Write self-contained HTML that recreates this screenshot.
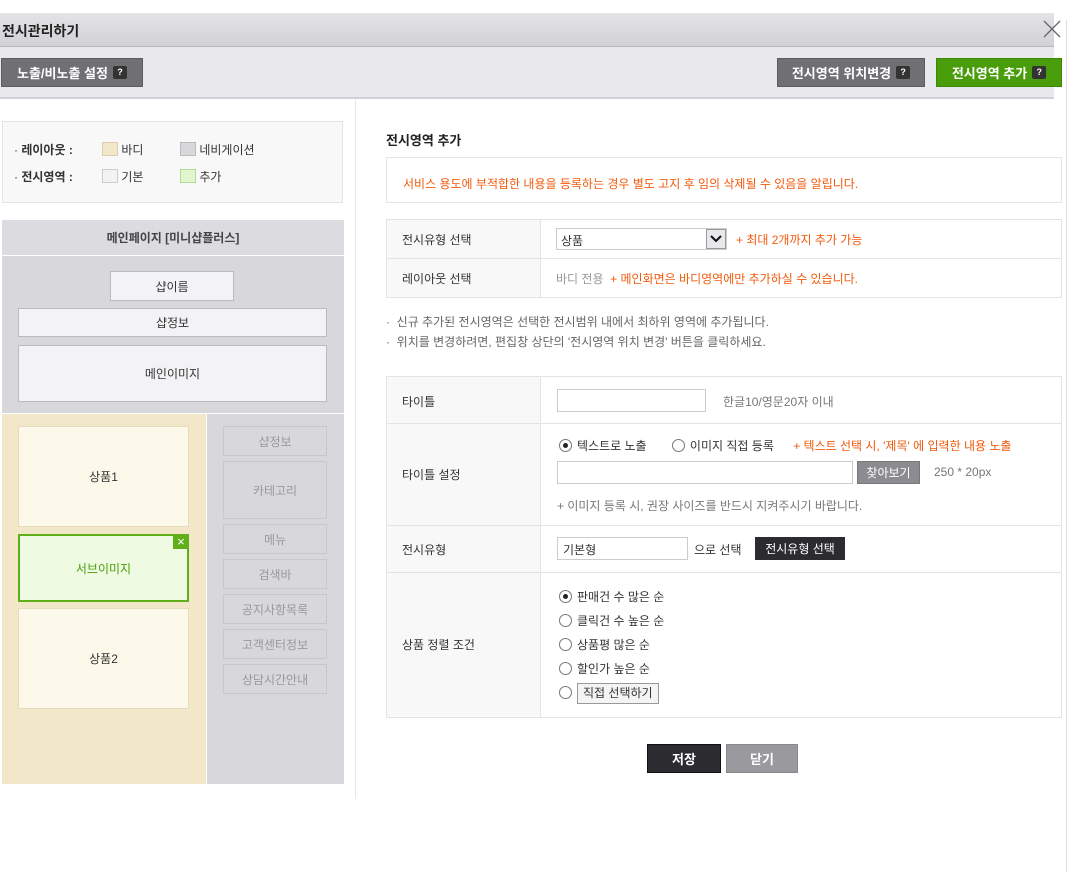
<!DOCTYPE html>
<html><head><meta charset="utf-8"><style>
*{box-sizing:border-box;margin:0;padding:0}
body{width:1080px;height:872px;background:#fff;font-family:"Liberation Sans","Noto Sans CJK KR",sans-serif;font-size:12px;color:#333;position:relative;overflow:hidden}
.a{position:absolute}
.bx{position:absolute;display:flex;align-items:center;justify-content:center}
.q{display:inline-block;width:14px;height:13px;background:#333;color:#fff;font-size:9px;line-height:13px;text-align:center;border-radius:2px;margin-left:5px;font-weight:bold}
.btn{position:absolute;display:flex;align-items:center;justify-content:center;color:#fff;font-size:13px;font-weight:bold}
.or{color:#f25a0c}
.rad{display:inline-block;width:13px;height:13px;border:1px solid #777;border-radius:50%;vertical-align:-2px;margin-right:5px;position:relative;background:#fff}
.rad.on:after{content:"";position:absolute;left:3px;top:3px;width:5px;height:5px;border-radius:50%;background:#222}
.nav{position:absolute;left:223px;width:104px;border:1px solid #c8c8cc;background:#d8d8dc;color:#999;display:flex;align-items:center;justify-content:center}
.inp{position:absolute;border:1px solid #ccc;background:#fff}
.sw{display:inline-block;width:16px;height:14px;vertical-align:-2px}
</style></head><body>
<div class="a" style="left:0;top:13px;width:1054px;height:34px;background:linear-gradient(#e4e4e7,#d2d2d6);border-bottom:1px solid #b8b8bc"></div>
<div class="a" style="left:2px;top:21px;font-size:14px;font-weight:bold;color:#222">전시관리하기</div>
<svg class="a" style="left:1042px;top:19px" width="20" height="20"><path d="M2 2L18 18M18 2L2 18" stroke="#666" stroke-width="1.3"/></svg>
<div class="a" style="left:0;top:47px;width:1054px;height:52px;background:#e9e9ed;border-bottom:2px solid #d0d0d6"></div>
<div class="a" style="left:1066px;top:20px;width:1px;height:852px;background:#ddd"></div>
<div class="btn" style="left:1px;top:58px;width:142px;height:29px;background:#707074;border:1px solid #5c5c60">노출/비노출 설정<span class="q">?</span></div>
<div class="btn" style="left:777px;top:58px;width:148px;height:29px;background:#707074;border:1px solid #5c5c60">전시영역 위치변경<span class="q">?</span></div>
<div class="btn" style="left:936px;top:58px;width:126px;height:29px;background:#4a9d0a;border:1px solid #3e8808">전시영역 추가<span class="q">?</span></div>
<div class="a" style="left:355px;top:99px;width:1px;height:700px;background:#e8e8e8"></div>
<!-- legend -->
<div class="a" style="left:2px;top:121px;width:341px;height:82px;background:#f8f8f8;border:1px solid #e4e4e4"></div>
<div class="a" style="left:14px;top:137px;line-height:27px;font-size:12px;width:320px">
<div style="position:relative">· <b>레이아웃 :</b><span class="a" style="left:88px;top:0"><span class="sw" style="background:#f2e8c9;border:1px solid #d9cfa9"></span> 바디</span><span class="a" style="left:166px;top:0"><span class="sw" style="background:#d8d8dc;border:1px solid #bbb"></span> 네비게이션</span></div>
<div style="position:relative">· <b>전시영역 :</b><span class="a" style="left:88px;top:0"><span class="sw" style="background:#f3f3f6;border:1px solid #ccc"></span> 기본</span><span class="a" style="left:166px;top:0"><span class="sw" style="background:#e2f6d0;border:1px solid #b6dc96"></span> 추가</span></div></div>
<!-- left map -->
<div class="bx" style="left:2px;top:220px;width:342px;height:35px;background:#dcdce0;font-weight:bold;color:#444">메인페이지 [미니샵플러스]</div>
<div class="a" style="left:2px;top:256px;width:342px;height:157px;background:#d8d8dc"></div>
<div class="bx" style="left:110px;top:271px;width:124px;height:30px;background:#f3f3f6;border:1px solid #bbb">샵이름</div>
<div class="bx" style="left:18px;top:308px;width:309px;height:29px;background:#f3f3f6;border:1px solid #bbb">샵정보</div>
<div class="bx" style="left:18px;top:345px;width:309px;height:57px;background:#f3f3f6;border:1px solid #bbb">메인이미지</div>
<div class="a" style="left:2px;top:414px;width:204px;height:370px;background:#f2e8c9"></div>
<div class="a" style="left:207px;top:414px;width:137px;height:370px;background:#d8d8dc"></div>
<div class="bx" style="left:18px;top:426px;width:171px;height:101px;background:#fcf8ea;border:1px solid #e6dcbb">상품1</div>
<div class="bx" style="left:18px;top:534px;width:171px;height:68px;background:#eefae2;border:2px solid #5fae1a;color:#4a9d0a">서브이미지</div>
<div class="bx" style="left:173px;top:534px;width:16px;height:15px;background:#5fae1a;color:#fff;font-size:13px">×</div>
<div class="bx" style="left:18px;top:608px;width:171px;height:101px;background:#fcf8ea;border:1px solid #e6dcbb">상품2</div>
<div class="nav" style="top:426px;height:30px">샵정보</div>
<div class="nav" style="top:461px;height:58px">카테고리</div>
<div class="nav" style="top:524px;height:30px">메뉴</div>
<div class="nav" style="top:559px;height:30px">검색바</div>
<div class="nav" style="top:594px;height:30px">공지사항목록</div>
<div class="nav" style="top:629px;height:30px">고객센터정보</div>
<div class="nav" style="top:664px;height:30px">상담시간안내</div>
<!-- right -->
<div class="a" style="left:386px;top:130px;font-size:13px;font-weight:bold;color:#222">전시영역 추가</div>
<div class="a" style="left:386px;top:157px;width:676px;height:46px;border:1px solid #e4e4e4;padding:17px 0 0 16px" ><span class="or">서비스 용도에 부적합한 내용을 등록하는 경우 별도 고지 후 임의 삭제될 수 있음을 알립니다.</span></div>
<div class="a" style="left:386px;top:219px;width:676px;height:79px;border:1px solid #e4e4e4"></div>
<div class="a" style="left:387px;top:220px;width:154px;height:77px;background:#f8f8f8;border-right:1px solid #e4e4e4"></div>
<div class="a" style="left:387px;top:258px;width:674px;height:1px;background:#e4e4e4"></div>
<div class="a" style="left:402px;top:231px">전시유형 선택</div>
<div class="a" style="left:402px;top:270px">레이아웃 선택</div>
<div class="inp" style="left:556px;top:228px;width:171px;height:22px;padding:3px 4px">상품</div>
<div class="bx" style="left:706px;top:229px;width:20px;height:20px;background:#e8e8ec;border:1px solid #999"><svg width="12" height="8"><path d="M1 1L6 6L11 1" stroke="#111" stroke-width="2" fill="none"/></svg></div>
<div class="a or" style="left:736px;top:231px">+ 최대 2개까지 추가 가능</div>
<div class="a" style="left:556px;top:270px"><span style="color:#999">바디 전용</span> &nbsp;<span class="or">+ 메인화면은 바디영역에만 추가하실 수 있습니다.</span></div>
<div class="a" style="left:386px;top:312px;color:#666;line-height:20px">
<div>· &nbsp;신규 추가된 전시영역은 선택한 전시범위 내에서 최하위 영역에 추가됩니다.</div>
<div>· &nbsp;위치를 변경하려면, 편집창 상단의 '전시영역 위치 변경' 버튼을 클릭하세요.</div></div>
<!-- table2 -->
<div class="a" style="left:386px;top:376px;width:676px;height:342px;border:1px solid #e4e4e4"></div>
<div class="a" style="left:387px;top:377px;width:154px;height:340px;background:#f8f8f8;border-right:1px solid #e4e4e4"></div>
<div class="a" style="left:387px;top:423px;width:674px;height:1px;background:#e4e4e4"></div>
<div class="a" style="left:387px;top:525px;width:674px;height:1px;background:#e4e4e4"></div>
<div class="a" style="left:387px;top:572px;width:674px;height:1px;background:#e4e4e4"></div>
<div class="a" style="left:402px;top:393px">타이틀</div>
<div class="a" style="left:402px;top:466px">타이틀 설정</div>
<div class="a" style="left:402px;top:541px">전시유형</div>
<div class="a" style="left:402px;top:636px">상품 정렬 조건</div>
<div class="inp" style="left:557px;top:389px;width:149px;height:23px"></div>
<div class="a" style="left:723px;top:393px;color:#777">한글10/영문20자 이내</div>
<div class="a" style="left:559px;top:437px"><span class="rad on"></span>텍스트로 노출 <span class="rad" style="margin-left:22px"></span>이미지 직접 등록 <span class="or" style="margin-left:16px">+ 텍스트 선택 시, '제목' 에 입력한 내용 노출</span></div>
<div class="inp" style="left:557px;top:461px;width:296px;height:23px"></div>
<div class="bx" style="left:857px;top:461px;width:63px;height:23px;background:#8c8c90;border:1px solid #777;color:#fff">찾아보기</div>
<div class="a" style="left:934px;top:465px;color:#777">250 * 20px</div>
<div class="a" style="left:557px;top:497px;color:#777">+ 이미지 등록 시, 권장 사이즈를 반드시 지켜주시기 바랍니다.</div>
<div class="inp" style="left:557px;top:537px;width:131px;height:23px;padding:3px 5px">기본형</div>
<div class="a" style="left:694px;top:541px">으로 선택</div>
<div class="bx" style="left:755px;top:537px;width:90px;height:23px;background:#2b2b30;color:#fff">전시유형 선택</div>
<div class="a" style="left:559px;top:585px;line-height:24px">
<div><span class="rad on"></span>판매건 수 많은 순</div>
<div><span class="rad"></span>클릭건 수 높은 순</div>
<div><span class="rad"></span>상품평 많은 순</div>
<div><span class="rad"></span>할인가 높은 순</div>
<div><span class="rad"></span><span style="display:inline-block;border:1px solid #999;background:#f4f4f4;padding:0 5px;line-height:19px">직접 선택하기</span></div></div>
<div class="btn" style="left:647px;top:744px;width:74px;height:29px;background:#2b2b30;border:1px solid #111">저장</div>
<div class="btn" style="left:726px;top:744px;width:72px;height:29px;background:#9a9a9e;border:1px solid #888">닫기</div>
</body></html>
